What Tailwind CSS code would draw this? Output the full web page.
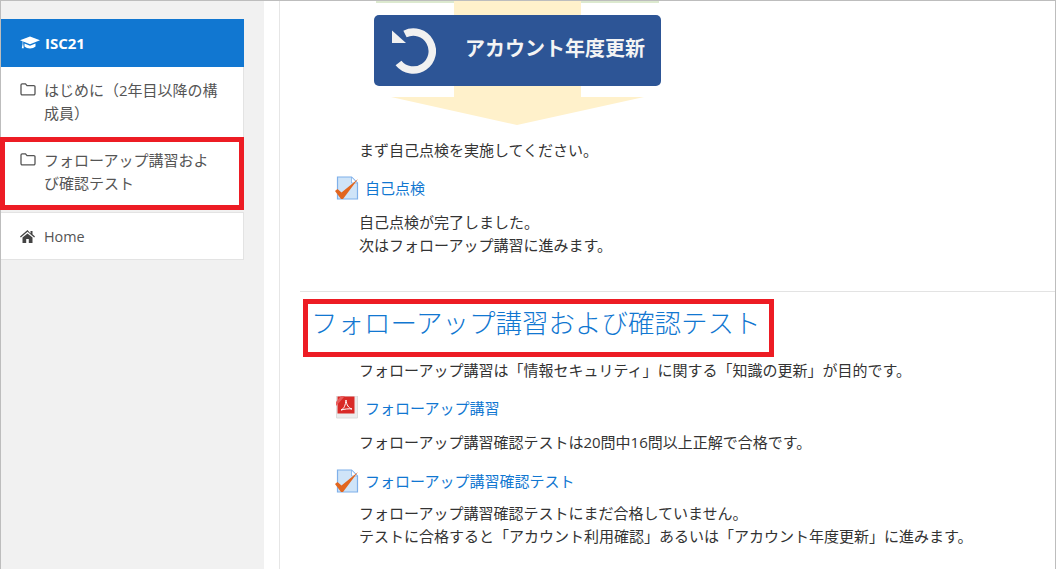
<!DOCTYPE html>
<html lang="ja">
<head>
    <meta charset="UTF-8">
    <title>ISC21</title>
    <script src="https://cdn.jsdelivr.net/npm/@tailwindcss/browser@4"></script>
</head>
<body class="w-[1056px] h-[569px] overflow-hidden bg-white font-['Open_Sans','Noto_Sans_CJK_JP',sans-serif] text-[15px] leading-[23px] text-[#333]">
    <div class="relative flex h-[569px] border-t border-x border-[#bdbdbd]">
        <!-- sidebar -->
        <aside class="w-[263px] shrink-0 bg-[#f1f1f1] pt-[18px] text-[#555]">
            <div class="w-[243px]">
                <div class="flex items-center gap-[5px] h-[48px] pl-[19px] bg-[#1177d1] text-white font-bold">
                    <svg class="w-[20px] h-[15px]" viewBox="0 0 20 15" fill="#fff"><path d="M10 .5 0 4.200l2.600 1v2.500l-.8 4.500h2l-.6-4.500V5.600L10 8.200 20 4.200zM4.500 7.600v3c1.300 1.300 3.400 2 5.500 2s4.200-.7 5.500-2v-3L10 9.800z"/></svg>
                    <span>ISC21</span>
                </div>
                <div class="flex items-start gap-[8px] h-[70px] pl-[19px] pr-[20px] pt-[12px] bg-white border-r border-[#e3e3e3]">
                    <svg class="w-[16px] h-[14px] mt-[3px] shrink-0" viewBox="0 0 16 14" fill="none" stroke="#555" stroke-width="1.3"><path d="M1 3a1.2 1.2 0 0 1 1.2-1.2h3.3L7 3.600h6.800A1.200 1.200 0 0 1 15 4.800v6.800a1.200 1.200 0 0 1-1.200 1.200H2.200A1.200 1.200 0 0 1 1 11.600z"/></svg>
                    <span>はじめに（2年目以降の構成員）</span>
                </div>
                <div class="flex items-start gap-[8px] h-[73px] pl-[19px] pr-[24px] pt-[12px] bg-white border-r border-[#e3e3e3]">
                    <svg class="w-[16px] h-[14px] mt-[3px] shrink-0" viewBox="0 0 16 14" fill="none" stroke="#555" stroke-width="1.3"><path d="M1 3a1.2 1.2 0 0 1 1.2-1.2h3.3L7 3.600h6.800A1.200 1.200 0 0 1 15 4.800v6.800a1.200 1.200 0 0 1-1.200 1.200H2.200A1.200 1.200 0 0 1 1 11.600z"/></svg>
                    <span>フォローアップ講習および確認テスト</span>
                </div>
                <div class="flex items-center gap-[9px] h-[48px] mt-[2px] pl-[19px] bg-white border border-l-0 border-[#e3e3e3] text-[14.4px]">
                    <svg class="w-[15px] h-[13px] shrink-0" viewBox="0 0 15 13" fill="#444"><path d="M7.500 0 0 6.500l.8.9L7.500 1.700l6.700 5.700.8-.9-2.500-2.200V1h-2v2.400zM2.500 7.600V13h3.700V9h2.600v4h3.700V7.600L7.500 3.400z"/></svg>
                    <span>Home</span>
                </div>
            </div>
        </aside>

        <!-- main -->
        <main class="flex-1 min-w-0">
            <div class="ml-[15px] pl-[20px] h-full border-l border-[#e6e6e6]">
                <div class="relative h-[124px]">
                    <svg class="absolute left-0 top-0 w-[400px] h-[124px]" viewBox="0 0 400 124"><rect x="76" y="0" width="283" height="2" fill="#dce9cf"/><polygon points="154,0 281,0 281,96 344,96 217,124 91,96 154,96" fill="#fff1cb"/></svg>
                    <div class="absolute left-[74px] top-[14px] flex items-center w-[287px] h-[71px] rounded-[5px] bg-[#2d5596]">
                        <svg class="ml-[16px] w-[46px] h-[50px]" viewBox="0 0 46 50" fill="none"><path d="M15 8A19 19 0 1 1 8.500 37" stroke="#f1f1f1" stroke-width="7.500"/><polygon points="2,4.500 2,17 16,17" fill="#f1f1f1"/></svg>
                        <span class="ml-[29px] mb-[5px] text-[20px] font-bold text-[#f4f4f4]">アカウント年度更新</span>
                    </div>
                </div>
                <div class="pl-[59px] pt-[14px]"><p>まず自己点検を実施してください。</p></div>
                <a class="flex items-center gap-[6px] pl-[35px] mt-[14px] text-[#1177d1]">
                    <svg class="w-[24px] h-[25px]" viewBox="0 0 24 25"><path d="M2.500 1h14l6 6v16h-20z" fill="#cfe4f8" stroke="#7fb0ea" stroke-width="1.200"/><path d="M16.500 1v6h6z" fill="#fff" stroke="#7fb0ea" stroke-width=".8"/><path d="M0 15l2.500-2 4 3.500L23 3 8 23H6z" fill="#e2661f"/></svg>
                    <span>自己点検</span>
                </a>
                <div class="pl-[59px] mt-[10px]"><p>自己点検が完了しました。</p><p>次はフォローアップ講習に進みます。</p></div>
                <div class="mt-[34px] border-t border-[#e3e3e3] pt-[14px] pl-[11px] text-[26.5px] leading-[35px] text-[#1177d1] font-light">フォローアップ講習および確認テスト</div>
                <div class="pl-[59px] mt-[18px]"><p>フォローアップ講習は「情報セキュリティ」に関する「知識の更新」が目的です。</p></div>
                <a class="flex items-center gap-[6px] pl-[35px] mt-[14px] text-[#1177d1]">
                    <svg class="w-[24px] h-[25px]" viewBox="0 0 24 25"><path d="M1.500 0h21v22h-21z" fill="#ececec" stroke="#ddd"/><path d="M2.500 .5h17v17h-17z" fill="#d92a27"/><path d="M1 6 6 0h4L1 10z" fill="#e85c5c"/><path d="M6 14c3-1 4.500-5 5-10 .5 5 2.500 8 6 9-3.500-.5-7 0-11 1z" fill="none" stroke="#fff" stroke-width="1"/></svg>
                    <span>フォローアップ講習</span>
                </a>
                <div class="pl-[59px] mt-[10px]"><p>フォローアップ講習確認テストは20問中16問以上正解で合格です。</p></div>
                <a class="flex items-center gap-[6px] pl-[35px] mt-[15px] text-[#1177d1]">
                    <svg class="w-[24px] h-[25px]" viewBox="0 0 24 25"><path d="M2.500 1h14l6 6v16h-20z" fill="#cfe4f8" stroke="#7fb0ea" stroke-width="1.200"/><path d="M16.500 1v6h6z" fill="#fff" stroke="#7fb0ea" stroke-width=".8"/><path d="M0 15l2.500-2 4 3.500L23 3 8 23H6z" fill="#e2661f"/></svg>
                    <span>フォローアップ講習確認テスト</span>
                </a>
                <div class="pl-[59px] mt-[8px]"><p>フォローアップ講習確認テストにまだ合格していません。</p><p>テストに合格すると「アカウント利用確認」あるいは「アカウント年度更新」に進みます。</p></div>
            </div>
        </main>

        <!-- annotation boxes -->
        <div class="absolute left-[-1px] top-[136px] w-[244px] h-[73px] border-[5px] border-[#ed1c24]"></div>
        <div class="absolute left-[302px] top-[298px] w-[471px] h-[58px] border-[5px] border-[#ed1c24]"></div>
    </div>
</body>
</html>
